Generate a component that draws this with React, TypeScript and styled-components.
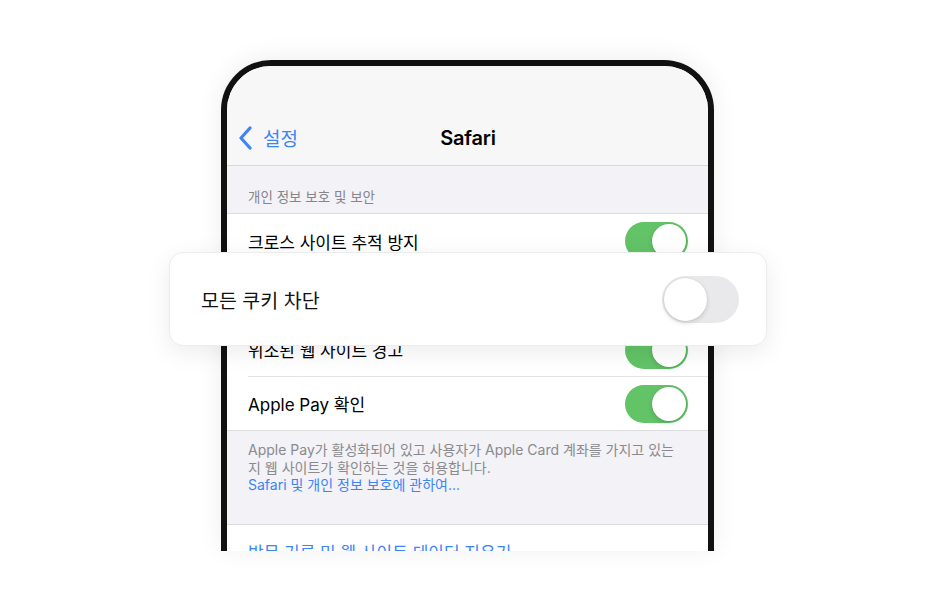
import React from "react";
import styled, { createGlobalStyle } from "styled-components";

const Global = createGlobalStyle`
  html, body { margin: 0; padding: 0; background: #ffffff; }
  body { font-family: "Inter", "Noto Sans CJK KR", "Noto Sans", sans-serif; -webkit-font-smoothing: antialiased; }
  * { box-sizing: border-box; }
`;

const Stage = styled.div`
  position: relative;
  width: 936px;
  height: 606px;
  overflow: hidden;
  background: #ffffff;
  display: flex;
  padding: 60px 0 0 221px;
`;

const Phone = styled.div`
  width: 493px;
  height: 491px;
  border: 6px solid #111111;
  border-bottom: none;
  border-radius: 50px 50px 0 0;
  background: #f2f2f7;
  overflow: hidden;
  display: flex;
  flex-direction: column;
  box-shadow: 0 -2px 26px rgba(0, 0, 0, 0.07);
`;

const NavBar = styled.div`
  height: 100px;
  flex: none;
  background: #f7f7f8;
  border-bottom: 1px solid #d9d9dd;
  display: grid;
  grid-template-columns: 1fr auto 1fr;
  align-items: center;
  padding: 44px 10px 0 11px;
`;

const BackButton = styled.div`
  display: flex;
  align-items: center;
  gap: 11px;
  color: #3d84f5;
  font-size: 19px;
`;

const Title = styled.div`
  font-size: 20px;
  font-weight: 600;
  color: #000;
  letter-spacing: -0.2px;
`;

const SectionHeader = styled.div`
  font-size: 13.5px;
  color: #85858a;
  padding: 22px 21px 7px;
  line-height: 18px;
`;

const Group = styled.div`
  background: #ffffff;
  border-top: 1px solid #dcdce0;
  border-bottom: 1px solid #dcdce0;
  display: flex;
  flex-direction: column;
`;

const Row = styled.div`
  height: 54px;
  margin-left: 21px;
  padding-right: 20px;
  display: flex;
  align-items: center;
  justify-content: space-between;
  font-size: 17px;
  color: #000;
  & + & { border-top: 1px solid #e3e3e6; }
`;

const ActionRow = styled.div`
  height: 54px;
  padding: 0 21px;
  display: flex;
  align-items: center;
  font-size: 17px;
  color: #3d84f5;
`;

const Track = styled.div<{ $on: boolean; $size: "sm" | "lg" }>`
  flex: none;
  width: ${(p) => (p.$size === "lg" ? 77 : 63)}px;
  height: ${(p) => (p.$size === "lg" ? 47 : 38)}px;
  border-radius: 999px;
  background: ${(p) => (p.$on ? "#62c367" : "#e9e9eb")};
  padding: 2px;
  display: flex;
  justify-content: ${(p) => (p.$on ? "flex-end" : "flex-start")};
`;

const Knob = styled.div<{ $size: "sm" | "lg" }>`
  width: ${(p) => (p.$size === "lg" ? 43 : 34)}px;
  height: ${(p) => (p.$size === "lg" ? 43 : 34)}px;
  border-radius: 50%;
  background: #fff;
  box-shadow: 0 2px 5px rgba(0, 0, 0, 0.14), 0 0 0 0.5px rgba(0, 0, 0, 0.06);
`;

const Footer = styled.div`
  padding: 10px 21px 30px;
  font-size: 14px;
  line-height: 17.5px;
  color: #8a8a8e;
`;

const Link = styled.div`
  color: #3d84f5;
`;

const Overlay = styled.div`
  position: absolute;
  left: 169px;
  top: 252px;
  width: 598px;
  height: 94px;
  background: #ffffff;
  border: 1px solid #ececee;
  border-radius: 14px;
  box-shadow: 0 6px 24px rgba(0, 0, 0, 0.08);
  display: flex;
  align-items: center;
  justify-content: space-between;
  padding: 0 27px 0 31px;
  font-size: 19.5px;
  color: #111;
`;

const Toggle = ({ on, size = "sm" }: { on: boolean; size?: "sm" | "lg" }) => (
  <Track $on={on} $size={size}>
    <Knob $size={size} />
  </Track>
);

const Chevron = () => (
  <svg width="14" height="24" viewBox="0 0 14 24" fill="none">
    <path d="M12 2 L3 12 L12 22" stroke="#3d84f5" strokeWidth="3.2" strokeLinecap="round" strokeLinejoin="round" />
  </svg>
);

export default function App() {
  return (
    <>
      <Global />
      <Stage>
        <Phone>
          <NavBar>
            <BackButton>
              <Chevron />
              <span>설정</span>
            </BackButton>
            <Title>Safari</Title>
            <div />
          </NavBar>
          <SectionHeader>개인 정보 보호 및 보안</SectionHeader>
          <Group>
            <Row>
              <span>크로스 사이트 추적 방지</span>
              <Toggle on />
            </Row>
            <Row>
              <span>모든 쿠키 차단</span>
              <Toggle on={false} />
            </Row>
            <Row>
              <span>위조된 웹 사이트 경고</span>
              <Toggle on />
            </Row>
            <Row>
              <span>Apple Pay 확인</span>
              <Toggle on />
            </Row>
          </Group>
          <Footer>
            Apple Pay가 활성화되어 있고 사용자가 Apple Card 계좌를 가지고 있는
            <br />
            지 웹 사이트가 확인하는 것을 허용합니다.
            <Link>Safari 및 개인 정보 보호에 관하여...</Link>
          </Footer>
          <Group>
            <ActionRow>방문 기록 및 웹 사이트 데이터 지우기</ActionRow>
          </Group>
        </Phone>
        <Overlay>
          <span>모든 쿠키 차단</span>
          <Toggle on={false} size="lg" />
        </Overlay>
      </Stage>
    </>
  );
}
